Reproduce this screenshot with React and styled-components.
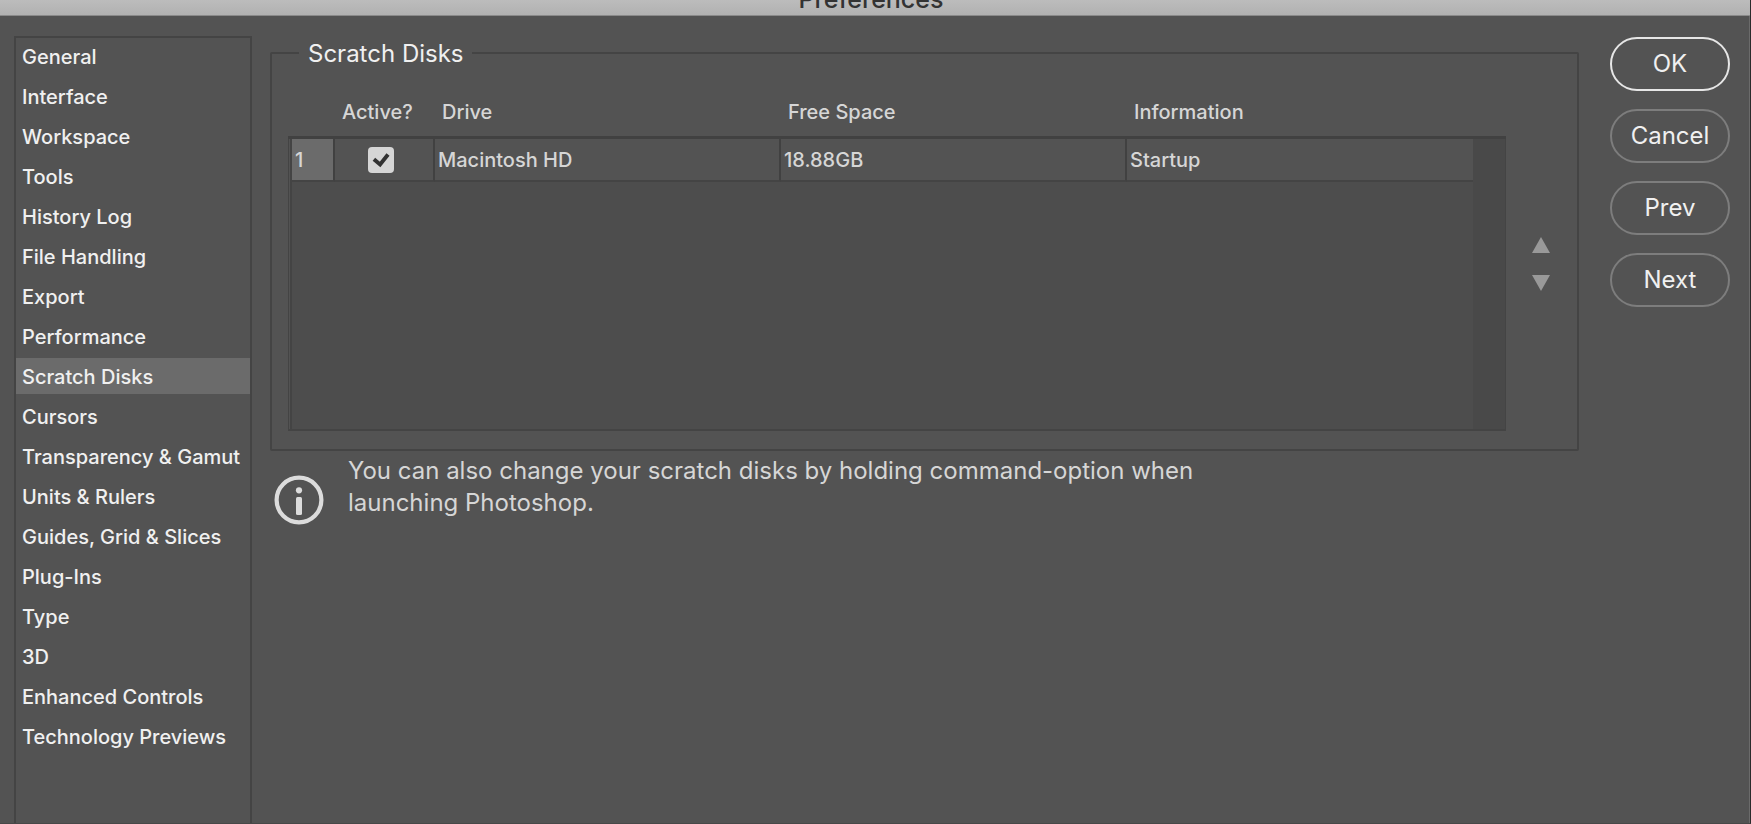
import React, { useState } from "react";
import styled, { createGlobalStyle } from "styled-components";

const GlobalStyle = createGlobalStyle`
    * {
        box-sizing: border-box;
    }
    body {
        margin: 0;
        background: #535353;
        color: #f0f0f0;
        font-family: Inter, "Liberation Sans", sans-serif;
        font-size: 20px;
        overflow: hidden;
    }
    button {
        font: inherit;
        color: inherit;
        background: none;
        border: 0;
        padding: 0;
        cursor: pointer;
    }
`;

const Window = styled.div`
    display: flex;
    flex-direction: column;
    height: 100vh;
    border-right: 1px solid #2b2b2b;
    border-bottom: 1px solid #484848;
`;

const TitleBar = styled.header`
    display: flex;
    flex: none;
    align-items: flex-end;
    justify-content: center;
    height: 16px;
    padding: 0 8px 4px 0;
    background: linear-gradient(#bcbcbc, #b1b1b1);
    border-bottom: 1px solid #8a8a8a;
    overflow: hidden;

    h1 {
        margin: 0;
        color: #333;
        font-size: 25px;
        font-weight: 500;
        line-height: 24px;
    }
`;

const Body = styled.div`
    display: flex;
    flex: 1;
    min-height: 0;
    padding: 20px 19px 0 14px;
    border-right: 1px solid #6b6b6b;
`;

const Sidebar = styled.nav`
    display: flex;
    flex: none;
    flex-direction: column;
    gap: 4px;
    width: 238px;
    border: 2px solid #444;
    border-bottom: 0;
`;

const SidebarItem = styled.button`
    flex: none;
    height: 36px;
    padding: 2px 6px 0;
    font-weight: 500;
    text-align: left;
    white-space: nowrap;
    background: ${(props) => (props.$selected ? "#6b6b6b" : "none")};
`;

const Main = styled.main`
    flex: 1;
    min-width: 0;
    margin: 0 31px 0 18px;
`;

const Group = styled.fieldset`
    min-width: 0;
    margin: 0;
    padding: 19px 27px 18px 16px;
    border: 2px solid #444;
    border-radius: 2px;

    legend {
        margin-left: 11px;
        padding: 2px 8px 0 9px;
        font-size: 24px;
        line-height: 32px;
    }
`;

const DiskArea = styled.div`
    display: flex;
    color: #d6d6d6;
`;

// the frame starts below the 47px of column titles
const DiskList = styled.div`
    display: flex;
    flex: 1;
    align-items: flex-start;
    min-width: 0;
    height: 342px;
    padding: 0 1px 2px 4px;
    background:
        linear-gradient(#414141, #414141) 0 47px / 100% 3px no-repeat,
        linear-gradient(#444, #444) 0 100% / 100% 2px no-repeat,
        linear-gradient(90deg, #444 1px, #535353 1px 2px, #444 2px) 0 47px /
            4px 100% no-repeat,
        linear-gradient(#444, #444) 100% 47px / 1px 100% no-repeat,
        linear-gradient(#4d4d4d, #4d4d4d) 0 47px / 100% 100% no-repeat;
`;

const DiskTable = styled.table`
    flex: 1;
    width: 100%;
    min-width: 0;
    border-collapse: separate;
    border-spacing: 0;
    table-layout: fixed;

    th {
        height: 50px;
        padding: 0 0 4px 7px;
        font-weight: 500;
        text-align: left;
        white-space: nowrap;
    }
    td {
        height: 43px;
        padding: 0 9px 0 3px;
        font-weight: 500;
        border-right: 2px solid #414141;
        border-bottom: 2px solid #444;
        background: #535353;
    }
    td:first-child {
        background: #6b6b6b;
    }
    td:last-child {
        border-right: 0;
    }
`;

const Col = styled.col`
    width: ${(props) => props.$width || "auto"};
`;

const ScrollTrack = styled.div`
    flex: none;
    align-self: stretch;
    width: 32px;
    margin-top: 50px;
    background: #494949;
`;

const Checkbox = styled.input`
    display: block;
    width: 26px;
    height: 26px;
    margin: 0 auto;
    appearance: none;
    border-radius: 4px;
    background: #d6d6d6;

    &:checked {
        background: #d6d6d6
            url("data:image/svg+xml,%3Csvg xmlns='http://www.w3.org/2000/svg' viewBox='0 0 26 26'%3E%3Cpath d='M5.9 12.3l6.2 5.2L20 7.5' fill='none' stroke='%23333' stroke-width='3.9'/%3E%3C/svg%3E");
    }
`;

const MoveButtons = styled.div`
    display: flex;
    flex: none;
    flex-direction: column;
    justify-content: center;
    gap: 22px;
    margin-left: 26px;
    padding-top: 8px;

    svg {
        display: block;
        fill: #999;
    }
`;

const Note = styled.div`
    display: flex;
    gap: 24px;
    padding: 4px;
    color: #d6d6d6;
    font-size: 24px;
    line-height: 32px;

    svg {
        flex: none;
        margin-top: 20px;
    }
    p {
        max-width: 860px;
        margin: 0;
    }
`;

const Actions = styled.div`
    display: flex;
    flex: none;
    flex-direction: column;
    gap: 18px;
    width: 120px;
    padding-top: 1px;
`;

const ActionButton = styled.button`
    flex: none;
    height: 54px;
    padding-bottom: 2px;
    border: 2px solid ${(props) => (props.$primary ? "#e6e6e6" : "#7d7d7d")};
    border-radius: 27px;
    font-size: 24px;
`;

const sections = [
    "General",
    "Interface",
    "Workspace",
    "Tools",
    "History Log",
    "File Handling",
    "Export",
    "Performance",
    "Scratch Disks",
    "Cursors",
    "Transparency & Gamut",
    "Units & Rulers",
    "Guides, Grid & Slices",
    "Plug-Ins",
    "Type",
    "3D",
    "Enhanced Controls",
    "Technology Previews",
];

const InfoIcon = () => (
    <svg width="50" height="50" viewBox="0 0 50 50" aria-hidden="true">
        <circle
            cx="25"
            cy="25"
            r="22.4"
            fill="none"
            stroke="#dcdcdc"
            strokeWidth="4.2"
        />
        <circle cx="25" cy="15.3" r="3.1" fill="#dcdcdc" />
        <rect x="22" y="22" width="6" height="18" rx="1.5" fill="#dcdcdc" />
    </svg>
);

const App = () => {
    const [section, setSection] = useState("Scratch Disks");
    const [active, setActive] = useState(true);

    return (
        <Window>
            <GlobalStyle />
            <TitleBar>
                <h1>Preferences</h1>
            </TitleBar>
            <Body>
                <Sidebar>
                    {sections.map((name) => (
                        <SidebarItem
                            key={name}
                            $selected={name === section}
                            onClick={() => setSection(name)}
                        >
                            {name}
                        </SidebarItem>
                    ))}
                </Sidebar>
                <Main>
                    <Group>
                        <legend>Scratch Disks</legend>
                        <DiskArea>
                            <DiskList>
                                <DiskTable>
                                    <colgroup>
                                        <Col $width="43px" />
                                        <Col $width="100px" />
                                        <Col />
                                        <Col />
                                        <Col />
                                    </colgroup>
                                    <thead>
                                        <tr>
                                            <th></th>
                                            <th id="active">Active?</th>
                                            <th>Drive</th>
                                            <th>Free Space</th>
                                            <th>Information</th>
                                        </tr>
                                    </thead>
                                    <tbody>
                                        <tr>
                                            <td>1</td>
                                            <td>
                                                <Checkbox
                                                    type="checkbox"
                                                    aria-labelledby="active"
                                                    checked={active}
                                                    onChange={() =>
                                                        setActive(!active)
                                                    }
                                                />
                                            </td>
                                            <td>Macintosh HD</td>
                                            <td>18.88GB</td>
                                            <td>Startup</td>
                                        </tr>
                                    </tbody>
                                </DiskTable>
                                <ScrollTrack />
                            </DiskList>
                            <MoveButtons>
                                <button aria-label="Move up">
                                    <svg width="18" height="16">
                                        <path d="M9 0l9 16H0z" />
                                    </svg>
                                </button>
                                <button aria-label="Move down">
                                    <svg width="18" height="16">
                                        <path d="M0 0h18L9 16z" />
                                    </svg>
                                </button>
                            </MoveButtons>
                        </DiskArea>
                    </Group>
                    <Note>
                        <InfoIcon />
                        <p>
                            You can also change your scratch disks by holding
                            command-option when launching Photoshop.
                        </p>
                    </Note>
                </Main>
                <Actions>
                    <ActionButton $primary>OK</ActionButton>
                    <ActionButton>Cancel</ActionButton>
                    <ActionButton>Prev</ActionButton>
                    <ActionButton>Next</ActionButton>
                </Actions>
            </Body>
        </Window>
    );
};

export default App;
